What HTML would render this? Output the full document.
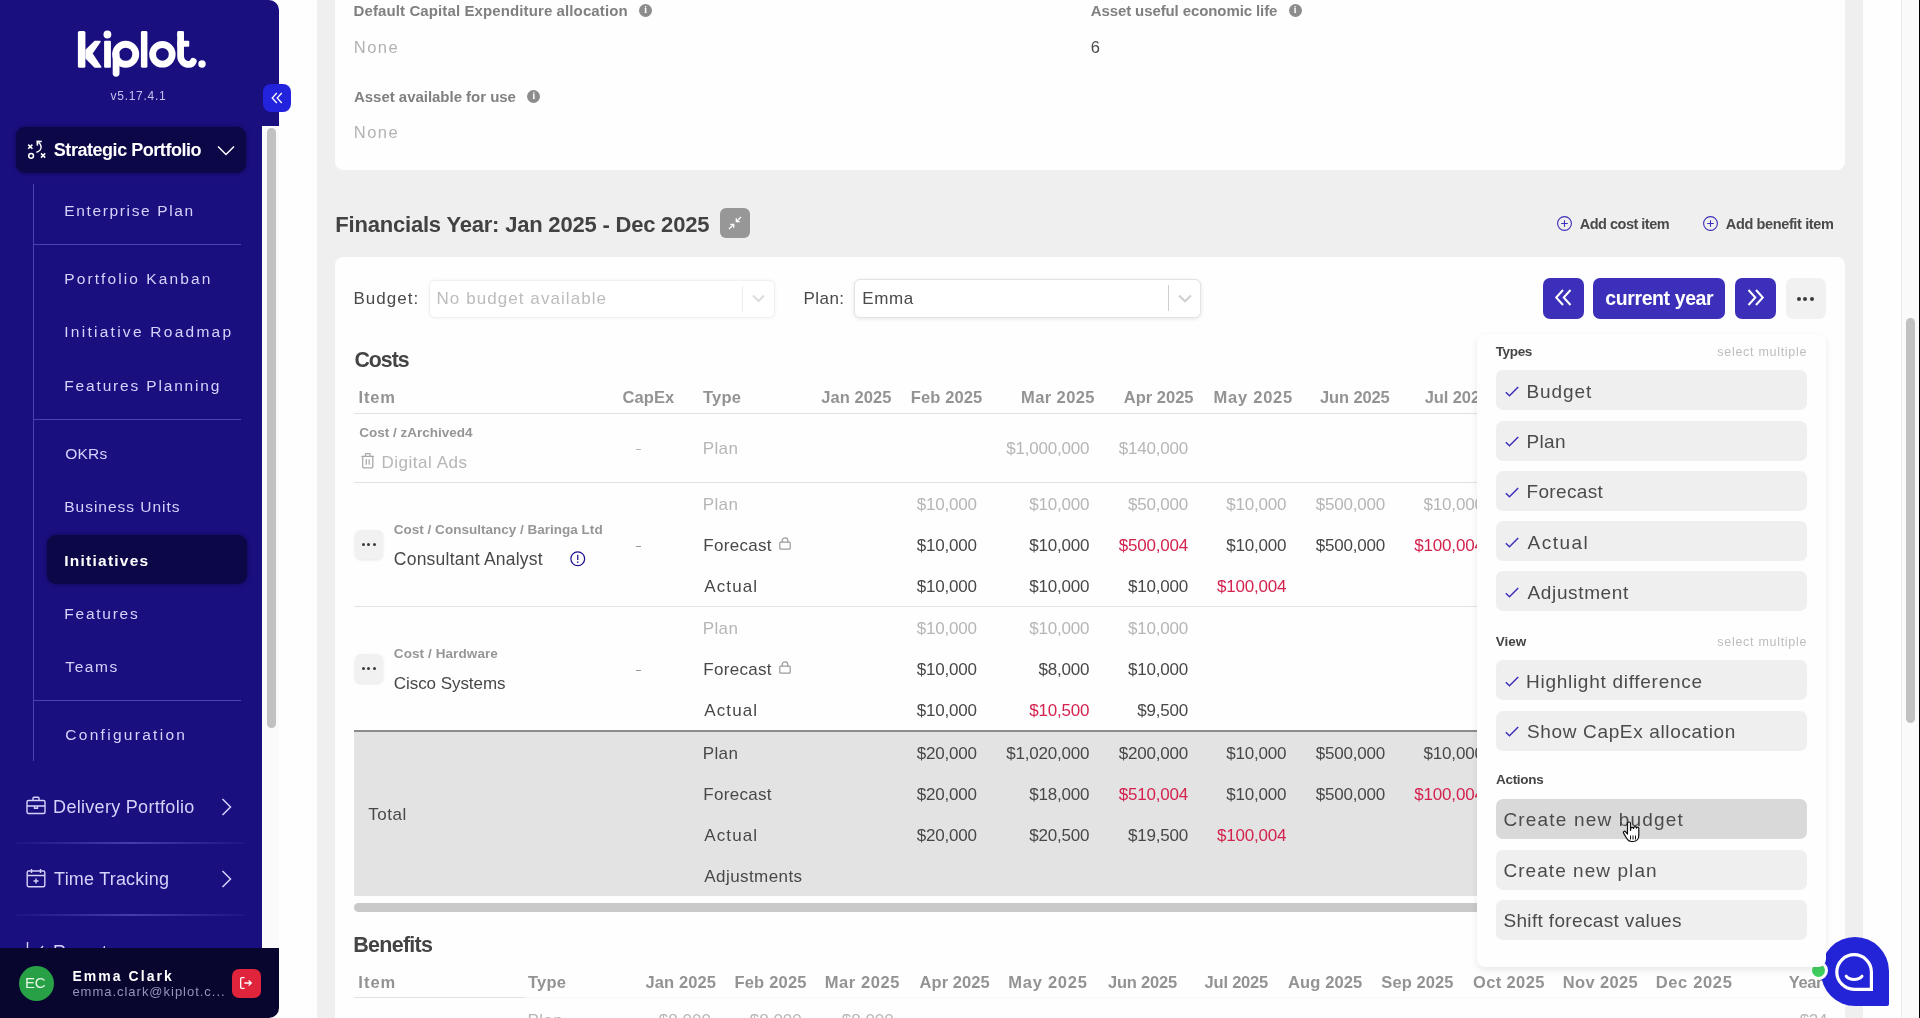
<!DOCTYPE html>
<html lang="en">
<head>
<meta charset="utf-8">
<title>Kiplot - Initiative Financials</title>
<style>
*{box-sizing:border-box;margin:0;padding:0}
html,body{width:1920px;height:1018px;overflow:hidden;background:#fefefe;font-family:"Liberation Sans",sans-serif;color:#444}
#root{position:absolute;left:0;top:0;width:1920px;height:1018px;overflow:hidden;will-change:transform}
.a{position:absolute}
.t{position:absolute;white-space:nowrap;line-height:1}
svg{position:absolute;overflow:visible}
#sb-top{left:0;top:0;width:279px;height:126px;background:#1a0f7f;border-top-right-radius:10px}
#sb-body{left:0;top:120px;width:262px;height:840px;background:#1a0f7f}
#sb-track{left:262px;top:126px;width:17px;height:822px;background:#fafafa}
#sb-thumb{left:267px;top:128px;width:9px;height:600px;background:#c1c1c1;border-radius:5px}
#collapse{left:263px;top:84px;width:28px;height:28px;background:#2322dd;border-radius:8px}
#grp{left:16px;top:127px;width:230px;height:46px;background:#0c0746;border-radius:9px;box-shadow:0 0 4px rgba(8,4,50,.6)}
#act{left:47px;top:535px;width:200px;height:49px;background:#0c0746;border-radius:9px;box-shadow:0 0 4px rgba(8,4,50,.6)}
.nsep{left:33px;width:208px;height:1px;background:#4b43b5}
.gsep{left:16px;width:230px;height:2px;background:linear-gradient(90deg,#1f1487,#453cb0 50%,#1f1487)}
#userbar{left:0;top:948px;width:279px;height:70px;background:#08052e;border-bottom-right-radius:10px}
#pagebg{left:316.500px;top:0;width:1546.500px;height:1018px;background:#efefef}
#card1{left:335px;top:0;width:1510px;height:170px;background:#fefefe;border-radius:0 0 8px 8px}
#card2{left:335px;top:257px;width:1510px;height:770px;background:#fefefe;border-radius:8px 8px 0 0}
.info{width:13px;height:13px;border-radius:50%;background:#8c8c8c;color:#fff;font:bold 9.500px/13px "Liberation Serif",serif;text-align:center}
.sel{border-radius:6px;background:#fff}
.pbtn{top:277.500px;height:41.500px;background:#3c2fba;border-radius:7px}
.hl{height:1px;background:#e2e2e2}
.dots{width:28px;height:29px;border-radius:6px;background:#f1f1f1;box-shadow:0 1px 3px rgba(0,0,0,.10)}
.dot{width:4px;height:4px;border-radius:50%;background:#3a3a3a}
#pop{left:1477px;top:334px;width:349px;height:633px;background:#fefefe;border-radius:8px;box-shadow:0 3px 7px rgba(0,0,0,.09)}
.pi{left:1496px;width:311px;height:40px;background:#efefef;border-radius:7px}
</style>
</head>
<body>
<div id="root">
<div class="a" id="pagebg"></div><div class="a" id="card1"></div><div class="a" id="card2"></div>
<div class="a" style="left:1901px;top:0;width:17.500px;height:1018px;background:#fafafa;border-left:1px solid #ececec"></div>
<div class="a" style="left:1905.500px;top:317.500px;width:9px;height:405px;background:#c1c1c1;border-radius:5px"></div>
<div class="a" style="left:1918.500px;top:0;width:1.500px;height:1018px;background:#000"></div>
<div class="t" style="left:353.50px;top:3.20px;font-size:15px;color:#808080;font-weight:bold;letter-spacing:0.11px;">Default Capital Expenditure allocation</div>
<div class="a info" style="left:639.100px;top:4.100px">i</div>
<div class="t" style="left:353.80px;top:39.20px;font-size:16.5px;color:#b2b2b2;letter-spacing:1.48px;">None</div>
<div class="t" style="left:1090.70px;top:3.20px;font-size:15px;color:#808080;font-weight:bold;letter-spacing:-0.10px;">Asset useful economic life</div>
<div class="a info" style="left:1288.600px;top:4.100px">i</div>
<div class="t" style="left:1090.70px;top:39.20px;font-size:16.5px;color:#4a4a4a;">6</div>
<div class="t" style="left:354.00px;top:89.00px;font-size:15px;color:#808080;font-weight:bold;letter-spacing:-0.03px;">Asset available for use</div>
<div class="a info" style="left:527.400px;top:89.700px">i</div>
<div class="t" style="left:353.80px;top:124.20px;font-size:16.5px;color:#b2b2b2;letter-spacing:1.48px;">None</div>
<div class="t" style="left:335.30px;top:214.00px;font-size:22px;color:#424242;font-weight:bold;letter-spacing:-0.20px;">Financials Year: Jan 2025 - Dec 2025</div>
<div class="a" style="left:720px;top:208px;width:30px;height:30px;border-radius:6px;background:#979797"></div>
<svg style="left:727px;top:215px" width="16" height="16" viewBox="0 0 16 16" fill="none" stroke="#fff" stroke-width="1.3"><path d="M14 2L9.300 6.700M9.300 3.200v3.500h3.500M2 14l4.700-4.700M6.700 12.800V9.300H3.200"/></svg>
<svg style="left:1556.7px;top:215.800px" width="15" height="15" viewBox="0 0 15 15" fill="none" stroke="#3c2fba" stroke-width="1.1"><circle cx="7.500" cy="7.500" r="6.900"/><path d="M7.500 4.200v6.600M4.200 7.500h6.600"/></svg>
<div class="t" style="left:1579.70px;top:217.00px;font-size:14.5px;color:#4a4a4a;font-weight:bold;letter-spacing:-0.49px;">Add cost item</div>
<svg style="left:1702.8px;top:215.800px" width="15" height="15" viewBox="0 0 15 15" fill="none" stroke="#3c2fba" stroke-width="1.1"><circle cx="7.500" cy="7.500" r="6.900"/><path d="M7.500 4.200v6.600M4.200 7.500h6.600"/></svg>
<div class="t" style="left:1725.80px;top:217.00px;font-size:14.5px;color:#4a4a4a;font-weight:bold;letter-spacing:-0.37px;">Add benefit item</div>
<div class="t" style="left:353.50px;top:290.30px;font-size:17px;color:#4a4a4a;letter-spacing:1.02px;">Budget:</div>
<div class="a sel" style="left:429px;top:279.500px;width:346px;height:38px;border:1px solid #f0f0f0;box-shadow:0 0 4px rgba(0,0,0,.05)"></div>
<div class="t" style="left:436.50px;top:290.30px;font-size:17px;color:#bcbcbc;letter-spacing:1.07px;">No budget available</div>
<div class="a" style="left:742px;top:286px;width:1px;height:26px;background:#ececec"></div>
<svg style="left:752px;top:294px" width="13" height="9" viewBox="0 0 13 9" fill="none" stroke="#dcdcdc" stroke-width="2"><path d="M1 1.500l5.500 5.500l5.500-5.500"/></svg>
<div class="t" style="left:803.50px;top:290.30px;font-size:17px;color:#4a4a4a;letter-spacing:0.44px;">Plan:</div>
<div class="a sel" style="left:854px;top:279px;width:347px;height:39px;border:1px solid #e3e3e3;box-shadow:0 1px 4px rgba(0,0,0,.10)"></div>
<div class="t" style="left:862.30px;top:290.30px;font-size:17px;color:#4a4a4a;letter-spacing:0.58px;">Emma</div>
<div class="a" style="left:1168px;top:285px;width:1px;height:26px;background:#cfcfcf"></div>
<svg style="left:1177.500px;top:294px" width="14" height="9" viewBox="0 0 14 9" fill="none" stroke="#cfcfcf" stroke-width="2"><path d="M1 1.500l6 5.800l6-5.800"/></svg>
<div class="a pbtn" style="left:1543px;width:41px"></div>
<svg style="left:1555px;top:289.200px" width="17" height="17" viewBox="0 0 17 17" fill="none" stroke="#fff" stroke-width="2"><path d="M8 1L1.200 8.500L8 16M15.500 1L8.700 8.500l6.800 7.500"/></svg>
<div class="a pbtn" style="left:1593px;width:132px"></div>
<div class="t" style="left:1605.30px;top:288.80px;font-size:19.5px;color:#fff;font-weight:bold;letter-spacing:-0.40px;">current year</div>
<div class="a pbtn" style="left:1735px;width:41px"></div>
<svg style="left:1747px;top:289.200px" width="17" height="17" viewBox="0 0 17 17" fill="none" stroke="#fff" stroke-width="2"><path d="M1.500 1l6.800 7.500L1.500 16M9 1l6.800 7.500L9 16"/></svg>
<div class="a" style="left:1785.500px;top:278px;width:40px;height:41px;border-radius:7px;background:#f1f1f1"></div>
<div class="a dot" style="left:1797.2px;top:297px"></div><div class="a dot" style="left:1803.4px;top:297px"></div><div class="a dot" style="left:1809.6px;top:297px"></div>
<div id="benefits" class="a" style="left:0;top:0;width:1826px;height:1018px;overflow:hidden">
<div class="t" style="left:353.30px;top:934.90px;font-size:21.5px;color:#444;font-weight:bold;letter-spacing:-0.74px;">Benefits</div>
<div class="t" style="left:358.30px;top:974.00px;font-size:16.5px;color:#939393;font-weight:bold;letter-spacing:1.01px;">Item</div><div class="t" style="left:528.00px;top:974.00px;font-size:16.5px;color:#939393;font-weight:bold;letter-spacing:0.23px;">Type</div><div class="t" style="left:645.40px;top:974.00px;font-size:16.5px;color:#939393;font-weight:bold;letter-spacing:0.12px;">Jan 2025</div><div class="t" style="left:734.40px;top:974.00px;font-size:16.5px;color:#939393;font-weight:bold;letter-spacing:0.21px;">Feb 2025</div><div class="t" style="left:824.80px;top:974.00px;font-size:16.5px;color:#939393;font-weight:bold;letter-spacing:0.56px;">Mar 2025</div><div class="t" style="left:919.60px;top:974.00px;font-size:16.5px;color:#939393;font-weight:bold;letter-spacing:0.07px;">Apr 2025</div><div class="t" style="left:1008.20px;top:974.00px;font-size:16.5px;color:#939393;font-weight:bold;letter-spacing:0.76px;">May 2025</div><div class="t" style="left:1107.90px;top:974.00px;font-size:16.5px;color:#939393;font-weight:bold;letter-spacing:-0.19px;">Jun 2025</div><div class="t" style="left:1204.60px;top:974.00px;font-size:16.5px;color:#939393;font-weight:bold;letter-spacing:-0.22px;">Jul 2025</div><div class="t" style="left:1288.00px;top:974.00px;font-size:16.5px;color:#939393;font-weight:bold;letter-spacing:0.12px;">Aug 2025</div><div class="t" style="left:1381.30px;top:974.00px;font-size:16.5px;color:#939393;font-weight:bold;letter-spacing:0.09px;">Sep 2025</div><div class="t" style="left:1473.00px;top:974.00px;font-size:16.5px;color:#939393;font-weight:bold;letter-spacing:0.37px;">Oct 2025</div><div class="t" style="left:1562.80px;top:974.00px;font-size:16.5px;color:#939393;font-weight:bold;letter-spacing:0.35px;">Nov 2025</div><div class="t" style="left:1655.70px;top:974.00px;font-size:16.5px;color:#939393;font-weight:bold;letter-spacing:0.66px;">Dec 2025</div><div class="t" style="left:1788.80px;top:974.00px;font-size:16.5px;color:#939393;font-weight:bold;letter-spacing:-0.42px;">Year</div>
<div class="a hl" style="left:354px;top:997px;width:171px"></div><div class="a" style="left:525px;top:997px;width:1301px;height:1px;background:#f9f9f9"></div>
<div class="t" style="left:527.50px;top:1012.00px;font-size:17px;color:#b6b6b6;letter-spacing:0.41px;">Plan</div><div class="t" style="left:658.86px;top:1012.00px;font-size:17px;color:#b6b6b6;">$8,000</div><div class="t" style="left:749.76px;top:1012.00px;font-size:17px;color:#b6b6b6;">$8,000</div><div class="t" style="left:841.76px;top:1012.00px;font-size:17px;color:#b6b6b6;">$8,000</div><div class="t" style="left:1799.70px;top:1012.00px;font-size:17px;color:#b6b6b6;letter-spacing:-0.28px;">$24,000</div>
</div>
<div id="costs" class="a" style="left:0;top:0;width:1477px;height:1018px;overflow:hidden">
<div class="t" style="left:354.50px;top:350.40px;font-size:21.3px;color:#444;font-weight:bold;letter-spacing:-1.01px;">Costs</div>
<div class="t" style="left:358.50px;top:389.30px;font-size:16.5px;color:#939393;font-weight:bold;letter-spacing:0.85px;">Item</div><div class="t" style="left:622.50px;top:389.30px;font-size:16.5px;color:#939393;font-weight:bold;letter-spacing:0.08px;">CapEx</div><div class="t" style="left:703.00px;top:389.30px;font-size:16.5px;color:#939393;font-weight:bold;letter-spacing:0.23px;">Type</div><div class="t" style="left:821.30px;top:389.30px;font-size:16.5px;color:#939393;font-weight:bold;letter-spacing:0.06px;">Jan 2025</div><div class="t" style="left:910.80px;top:389.30px;font-size:16.5px;color:#939393;font-weight:bold;letter-spacing:0.11px;">Feb 2025</div><div class="t" style="left:1021.00px;top:389.30px;font-size:16.5px;color:#939393;font-weight:bold;letter-spacing:0.41px;">Mar 2025</div><div class="t" style="left:1123.80px;top:389.30px;font-size:16.5px;color:#939393;font-weight:bold;">Apr 2025</div><div class="t" style="left:1213.50px;top:389.30px;font-size:16.5px;color:#939393;font-weight:bold;letter-spacing:0.76px;">May 2025</div><div class="t" style="left:1320.00px;top:389.30px;font-size:16.5px;color:#939393;font-weight:bold;letter-spacing:-0.12px;">Jun 2025</div><div class="t" style="left:1424.80px;top:389.30px;font-size:16.5px;color:#939393;font-weight:bold;letter-spacing:-0.11px;">Jul 2025</div>
<div class="a hl" style="left:354px;top:413px;width:1130px"></div>
<div class="t" style="left:359.30px;top:426.00px;font-size:13.5px;color:#969696;font-weight:bold;">Cost / zArchived4</div><svg style="left:361px;top:452.600px" width="13.500" height="15.500" viewBox="0 0 13.500 15.500" fill="none" stroke="#a8a8a8" stroke-width="1.250"><path d="M.4 3.300h12.700M4.400 3.100V1.200a.5.500 0 0 1 .5-.5h3.700a.5.500 0 0 1 .5.500v1.900M1.700 3.500v10.300a1 1 0 0 0 1 1h8.100a1 1 0 0 0 1-1V3.500M5.300 6.300v5.400M8.200 6.300v5.400"/></svg><div class="t" style="left:381.50px;top:454.00px;font-size:17px;color:#b6b6b6;letter-spacing:0.52px;">Digital Ads</div><div class="a" style="left:636.300px;top:448.600px;width:5px;height:1.200px;background:#b5b5b5"></div><div class="t" style="left:702.70px;top:440.30px;font-size:17px;color:#b6b6b6;letter-spacing:0.41px;">Plan</div><div class="t" style="left:1006.27px;top:440.30px;font-size:17px;color:#b6b6b6;letter-spacing:-0.20px;">$1,000,000</div><div class="t" style="left:1118.65px;top:440.30px;font-size:17px;color:#b6b6b6;letter-spacing:-0.20px;">$140,000</div>
<div class="a hl" style="left:354px;top:482px;width:1130px"></div>
<div class="a dots" style="left:355.0px;top:530.0px"></div><div class="a dot" style="left:361.9px;top:542.8px;width:3.300px;height:3.300px"></div><div class="a dot" style="left:367.1px;top:542.8px;width:3.300px;height:3.300px"></div><div class="a dot" style="left:372.6px;top:542.8px;width:3.300px;height:3.300px"></div>
<div class="t" style="left:393.80px;top:523.30px;font-size:13.5px;color:#969696;font-weight:bold;letter-spacing:0.01px;">Cost / Consultancy / Baringa Ltd</div><div class="t" style="left:393.80px;top:551.00px;font-size:17.5px;color:#484848;letter-spacing:0.23px;">Consultant Analyst</div><svg style="left:570px;top:551.200px" width="15.500" height="15.500" viewBox="0 0 15.500 15.500" fill="none" stroke="#1c1390" stroke-width="1.250"><circle cx="7.750" cy="7.750" r="6.900"/><path d="M7.750 3.700v5.200M7.750 10.400v1.600"/></svg><div class="a" style="left:636.300px;top:545.600px;width:5px;height:1.200px;background:#9a9a9a"></div>
<div class="t" style="left:702.70px;top:496.00px;font-size:17px;color:#b6b6b6;letter-spacing:0.41px;">Plan</div><div class="t" style="left:703.30px;top:537.30px;font-size:17px;color:#484848;letter-spacing:0.30px;">Forecast</div><div class="t" style="left:704.30px;top:577.80px;font-size:17px;color:#484848;letter-spacing:1.11px;">Actual</div><svg style="left:779.0px;top:536.8px" width="12" height="13" viewBox="0 0 12 13" fill="none" stroke="#9a9a9a" stroke-width="1.200"><rect x=".8" y="5.200" width="10.400" height="7" rx="1"/><path d="M3.200 5.200V3.600a2.800 2.800 0 0 1 5.600 0v1.600"/></svg>
<div class="t" style="left:916.70px;top:496.00px;font-size:17px;color:#b6b6b6;letter-spacing:-0.20px;">$10,000</div><div class="t" style="left:1029.30px;top:496.00px;font-size:17px;color:#b6b6b6;letter-spacing:-0.20px;">$10,000</div><div class="t" style="left:1127.90px;top:496.00px;font-size:17px;color:#b6b6b6;letter-spacing:-0.20px;">$50,000</div><div class="t" style="left:1226.20px;top:496.00px;font-size:17px;color:#b6b6b6;letter-spacing:-0.20px;">$10,000</div><div class="t" style="left:1315.65px;top:496.00px;font-size:17px;color:#b6b6b6;letter-spacing:-0.20px;">$500,000</div><div class="t" style="left:1423.60px;top:496.00px;font-size:17px;color:#b6b6b6;letter-spacing:-0.20px;">$10,000</div>
<div class="t" style="left:916.70px;top:537.30px;font-size:17px;color:#484848;letter-spacing:-0.20px;">$10,000</div><div class="t" style="left:1029.30px;top:537.30px;font-size:17px;color:#484848;letter-spacing:-0.20px;">$10,000</div><div class="t" style="left:1118.65px;top:537.30px;font-size:17px;color:#d4224e;letter-spacing:-0.20px;">$500,004</div><div class="t" style="left:1226.20px;top:537.30px;font-size:17px;color:#484848;letter-spacing:-0.20px;">$10,000</div><div class="t" style="left:1315.65px;top:537.30px;font-size:17px;color:#484848;letter-spacing:-0.20px;">$500,000</div><div class="t" style="left:1414.35px;top:537.30px;font-size:17px;color:#d4224e;letter-spacing:-0.20px;">$100,004</div>
<div class="t" style="left:916.70px;top:577.80px;font-size:17px;color:#484848;letter-spacing:-0.20px;">$10,000</div><div class="t" style="left:1029.30px;top:577.80px;font-size:17px;color:#484848;letter-spacing:-0.20px;">$10,000</div><div class="t" style="left:1127.90px;top:577.80px;font-size:17px;color:#484848;letter-spacing:-0.20px;">$10,000</div><div class="t" style="left:1216.95px;top:577.80px;font-size:17px;color:#d4224e;letter-spacing:-0.20px;">$100,004</div>
<div class="a hl" style="left:354px;top:606px;width:1130px"></div>
<div class="a dots" style="left:355.0px;top:654.0px"></div><div class="a dot" style="left:361.9px;top:666.8px;width:3.300px;height:3.300px"></div><div class="a dot" style="left:367.1px;top:666.8px;width:3.300px;height:3.300px"></div><div class="a dot" style="left:372.6px;top:666.8px;width:3.300px;height:3.300px"></div>
<div class="t" style="left:393.80px;top:647.30px;font-size:13.5px;color:#969696;font-weight:bold;letter-spacing:0.09px;">Cost / Hardware</div><div class="t" style="left:393.80px;top:675.00px;font-size:17px;color:#484848;letter-spacing:-0.06px;">Cisco Systems</div><div class="a" style="left:636.300px;top:669.600px;width:5px;height:1.200px;background:#9a9a9a"></div>
<div class="t" style="left:702.70px;top:620.00px;font-size:17px;color:#b6b6b6;letter-spacing:0.41px;">Plan</div><div class="t" style="left:703.30px;top:661.30px;font-size:17px;color:#484848;letter-spacing:0.30px;">Forecast</div><div class="t" style="left:704.30px;top:701.80px;font-size:17px;color:#484848;letter-spacing:1.11px;">Actual</div><svg style="left:779.0px;top:660.8px" width="12" height="13" viewBox="0 0 12 13" fill="none" stroke="#9a9a9a" stroke-width="1.200"><rect x=".8" y="5.200" width="10.400" height="7" rx="1"/><path d="M3.200 5.200V3.600a2.800 2.800 0 0 1 5.600 0v1.600"/></svg>
<div class="t" style="left:916.70px;top:620.00px;font-size:17px;color:#b6b6b6;letter-spacing:-0.20px;">$10,000</div><div class="t" style="left:1029.30px;top:620.00px;font-size:17px;color:#b6b6b6;letter-spacing:-0.20px;">$10,000</div><div class="t" style="left:1127.90px;top:620.00px;font-size:17px;color:#b6b6b6;letter-spacing:-0.20px;">$10,000</div>
<div class="t" style="left:916.70px;top:661.30px;font-size:17px;color:#484848;letter-spacing:-0.20px;">$10,000</div><div class="t" style="left:1038.56px;top:661.30px;font-size:17px;color:#484848;letter-spacing:-0.20px;">$8,000</div><div class="t" style="left:1127.90px;top:661.30px;font-size:17px;color:#484848;letter-spacing:-0.20px;">$10,000</div>
<div class="t" style="left:916.70px;top:701.80px;font-size:17px;color:#484848;letter-spacing:-0.20px;">$10,000</div><div class="t" style="left:1029.30px;top:701.80px;font-size:17px;color:#d4224e;letter-spacing:-0.20px;">$10,500</div><div class="t" style="left:1137.16px;top:701.80px;font-size:17px;color:#484848;letter-spacing:-0.20px;">$9,500</div>
<div class="a" style="left:354px;top:730px;width:1130px;height:166px;background:#e3e3e3;border-top:2px solid #8c8c8c"></div>
<div class="t" style="left:368.30px;top:806.00px;font-size:17px;color:#484848;letter-spacing:0.52px;">Total</div><div class="t" style="left:702.70px;top:745.30px;font-size:17px;color:#484848;letter-spacing:0.41px;">Plan</div><div class="t" style="left:703.30px;top:786.00px;font-size:17px;color:#484848;letter-spacing:0.30px;">Forecast</div><div class="t" style="left:704.30px;top:827.30px;font-size:17px;color:#484848;letter-spacing:1.11px;">Actual</div><div class="t" style="left:704.30px;top:868.00px;font-size:17px;color:#484848;letter-spacing:0.42px;">Adjustments</div>
<div class="t" style="left:916.70px;top:745.30px;font-size:17px;color:#484848;letter-spacing:-0.20px;">$20,000</div><div class="t" style="left:1006.27px;top:745.30px;font-size:17px;color:#484848;letter-spacing:-0.20px;">$1,020,000</div><div class="t" style="left:1118.65px;top:745.30px;font-size:17px;color:#484848;letter-spacing:-0.20px;">$200,000</div><div class="t" style="left:1226.20px;top:745.30px;font-size:17px;color:#484848;letter-spacing:-0.20px;">$10,000</div><div class="t" style="left:1315.65px;top:745.30px;font-size:17px;color:#484848;letter-spacing:-0.20px;">$500,000</div><div class="t" style="left:1423.60px;top:745.30px;font-size:17px;color:#484848;letter-spacing:-0.20px;">$10,000</div>
<div class="t" style="left:916.70px;top:786.00px;font-size:17px;color:#484848;letter-spacing:-0.20px;">$20,000</div><div class="t" style="left:1029.30px;top:786.00px;font-size:17px;color:#484848;letter-spacing:-0.20px;">$18,000</div><div class="t" style="left:1118.65px;top:786.00px;font-size:17px;color:#d4224e;letter-spacing:-0.20px;">$510,004</div><div class="t" style="left:1226.20px;top:786.00px;font-size:17px;color:#484848;letter-spacing:-0.20px;">$10,000</div><div class="t" style="left:1315.65px;top:786.00px;font-size:17px;color:#484848;letter-spacing:-0.20px;">$500,000</div><div class="t" style="left:1414.35px;top:786.00px;font-size:17px;color:#d4224e;letter-spacing:-0.20px;">$100,004</div>
<div class="t" style="left:916.70px;top:827.30px;font-size:17px;color:#484848;letter-spacing:-0.20px;">$20,000</div><div class="t" style="left:1029.30px;top:827.30px;font-size:17px;color:#484848;letter-spacing:-0.20px;">$20,500</div><div class="t" style="left:1127.90px;top:827.30px;font-size:17px;color:#484848;letter-spacing:-0.20px;">$19,500</div><div class="t" style="left:1216.95px;top:827.30px;font-size:17px;color:#d4224e;letter-spacing:-0.20px;">$100,004</div>
<div class="a" style="left:354px;top:903px;width:1140px;height:9px;background:#c9c9c9;border-radius:5px"></div>
</div>
<div id="chat">
<div class="a" style="left:1821px;top:936.500px;width:68px;height:69.500px;background:#2323d8;border-radius:34px 34px 2px 34px"></div>
<svg style="left:1833px;top:950.500px" width="42" height="42" viewBox="0 0 42 42" fill="none" stroke="#fff" stroke-width="3.200"><path d="M38.400 21a17.300 17.300 0 1 0-17.300 17.300h17.300z"/><path d="M13.200 25.200c3.600 4.300 12.200 4.300 15.800 0" stroke-width="3" stroke-linecap="round"/></svg>
<div class="a" style="left:1808.500px;top:960.500px;width:19px;height:19px;border-radius:50%;background:#41cf60;border:3.500px solid #fff"></div>
</div>
<div id="popup">
<div class="a" id="pop"></div>
<div class="t" style="left:1495.70px;top:345.00px;font-size:13.5px;color:#444;font-weight:bold;letter-spacing:-0.35px;">Types</div><div class="t" style="left:1717.30px;top:346.00px;font-size:12.5px;color:#bdbdbd;letter-spacing:0.71px;">select multiple</div>
<div class="a pi" style="top:370.0px"></div><svg style="left:1505.0px;top:385.6px" width="14" height="11" viewBox="0 0 14 11" fill="none" stroke="#3c2fba" stroke-width="1.500"><path d="M.8 6.200l3.700 3.600L13.200 1"/></svg><div class="t" style="left:1526.50px;top:381.50px;font-size:19px;color:#4b4b4b;letter-spacing:0.91px;">Budget</div>
<div class="a pi" style="top:420.5px"></div><svg style="left:1505.0px;top:436.1px" width="14" height="11" viewBox="0 0 14 11" fill="none" stroke="#3c2fba" stroke-width="1.500"><path d="M.8 6.200l3.700 3.600L13.200 1"/></svg><div class="t" style="left:1526.50px;top:432.00px;font-size:19px;color:#4b4b4b;letter-spacing:0.35px;">Plan</div>
<div class="a pi" style="top:471.0px"></div><svg style="left:1505.0px;top:486.6px" width="14" height="11" viewBox="0 0 14 11" fill="none" stroke="#3c2fba" stroke-width="1.500"><path d="M.8 6.200l3.700 3.600L13.200 1"/></svg><div class="t" style="left:1526.50px;top:482.30px;font-size:19px;color:#4b4b4b;letter-spacing:0.34px;">Forecast</div>
<div class="a pi" style="top:521.0px"></div><svg style="left:1505.0px;top:536.6px" width="14" height="11" viewBox="0 0 14 11" fill="none" stroke="#3c2fba" stroke-width="1.500"><path d="M.8 6.200l3.700 3.600L13.200 1"/></svg><div class="t" style="left:1527.50px;top:532.80px;font-size:19px;color:#4b4b4b;letter-spacing:1.48px;">Actual</div>
<div class="a pi" style="top:571.3px"></div><svg style="left:1505.0px;top:586.9px" width="14" height="11" viewBox="0 0 14 11" fill="none" stroke="#3c2fba" stroke-width="1.500"><path d="M.8 6.200l3.700 3.600L13.200 1"/></svg><div class="t" style="left:1527.50px;top:583.00px;font-size:19px;color:#4b4b4b;letter-spacing:0.64px;">Adjustment</div>
<div class="t" style="left:1495.70px;top:634.80px;font-size:13.5px;color:#444;font-weight:bold;letter-spacing:0.03px;">View</div><div class="t" style="left:1717.30px;top:635.80px;font-size:12.5px;color:#bdbdbd;letter-spacing:0.71px;">select multiple</div>
<div class="a pi" style="top:660.4px"></div><svg style="left:1505.0px;top:676.0px" width="14" height="11" viewBox="0 0 14 11" fill="none" stroke="#3c2fba" stroke-width="1.500"><path d="M.8 6.200l3.700 3.600L13.200 1"/></svg><div class="t" style="left:1526.00px;top:671.50px;font-size:19px;color:#4b4b4b;letter-spacing:0.72px;">Highlight difference</div>
<div class="a pi" style="top:710.6px"></div><svg style="left:1505.0px;top:726.2px" width="14" height="11" viewBox="0 0 14 11" fill="none" stroke="#3c2fba" stroke-width="1.500"><path d="M.8 6.200l3.700 3.600L13.200 1"/></svg><div class="t" style="left:1527.00px;top:722.40px;font-size:19px;color:#4b4b4b;letter-spacing:0.65px;">Show CapEx allocation</div>
<div class="t" style="left:1496.00px;top:773.00px;font-size:13.5px;color:#444;font-weight:bold;letter-spacing:-0.30px;">Actions</div>
<div class="a pi" style="top:799.2px;background:#d9d9d9"></div><div class="t" style="left:1503.40px;top:809.70px;font-size:19px;color:#4b4b4b;letter-spacing:1.18px;">Create new budget</div>
<div class="a pi" style="top:849.8px;background:#efefef"></div><div class="t" style="left:1503.40px;top:860.50px;font-size:19px;color:#4b4b4b;letter-spacing:1.06px;">Create new plan</div>
<div class="a pi" style="top:900.0px;background:#efefef"></div><div class="t" style="left:1503.40px;top:911.00px;font-size:19px;color:#4b4b4b;letter-spacing:0.35px;">Shift forecast values</div>
<svg style="left:1622px;top:822px" width="18" height="22" viewBox="0 0 18 22"><path d="M5.500 1.500a1.500 1.500 0 0 1 3 0v7l.3-2.300a1.400 1.400 0 0 1 2.700.3l.2-.8a1.300 1.300 0 0 1 2.600.5l.2-.3a1.200 1.200 0 0 1 2.300.6v6.500c0 3.600-2 6.500-5.600 6.500h-1.800c-2.400 0-3.700-1.300-4.800-3.200l-3-5.200c-.8-1.400 1-2.600 2.100-1.300l1.800 2.200z" fill="#fff" stroke="#111" stroke-width="1.200" stroke-linejoin="round"/><path d="M8.500 13.500v4M11 13.500v4M13.500 13.500v4" stroke="#111" stroke-width="1" fill="none"/></svg>
</div>
<div id="sidebar">
<div class="a" id="sb-track"></div><div class="a" id="sb-thumb"></div>
<div class="a" id="sb-top"></div><div class="a" id="sb-body"></div>
<svg style="left:70px;top:22px" width="144" height="62" viewBox="0 0 144 62" fill="#fff" stroke="none">
<rect x="7.900" y="9" width="7.500" height="36.750" rx="1.600"/>
<path d="M24.600 18.750H30a.8.800 0 0 1 .6 1.300L22.700 31.600L31.300 44.400a.8.800 0 0 1-.7 1.350H24.600L15.400 36.500V27.800z"/>
<circle cx="37.400" cy="12.500" r="3.900"/>
<rect x="34.100" y="18.750" width="6.800" height="27" rx="1"/>
<circle cx="55.700" cy="32.250" r="10.050" fill="none" stroke="#fff" stroke-width="6.900"/>
<path d="M46.100 32V51.300" fill="none" stroke="#fff" stroke-width="6.800" stroke-linecap="round"/>
<rect x="70.900" y="9" width="6.500" height="36.750" rx="1.400"/>
<circle cx="92.400" cy="32.300" r="9.800" fill="none" stroke="#fff" stroke-width="6.800"/>
<path d="M110.600 12.500V34.300A8.100 8.100 0 0 0 118.700 42.400A4.800 4.800 0 0 0 123.300 39.300" fill="none" stroke="#fff" stroke-width="6.750" stroke-linecap="round"/>
<rect x="107.250" y="9" width="6.750" height="6" rx="1.400"/>
<rect x="107.250" y="18.750" width="12" height="6" rx="1"/>
<circle cx="132" cy="42" r="3.700"/>
</svg>
<div class="t" style="left:110.60px;top:89.90px;font-size:12px;color:#c5c1f0;letter-spacing:0.71px;">v5.17.4.1</div>
<div class="a" id="grp"></div>
<svg style="left:26px;top:138px" width="22" height="22" viewBox="0 0 22 22" fill="none" stroke="#fff" stroke-width="1.500"><path d="M2.200 6.600l4.200 4.200M6.400 6.600l-4.200 4.200M15 15.400l4.200 4.200M19.200 15.400l-4.200 4.200"/><circle cx="5.100" cy="17.800" r="2.400"/><path d="M10.300 14.400C13 13.500 15.800 11 15 8C14.600 6.300 13.600 5 12.300 4.300M15.800 3.600L11.200 3.300L11.400 7.600"/></svg>
<div class="t" style="left:53.80px;top:141.20px;font-size:18px;color:#fff;font-weight:bold;letter-spacing:-0.46px;">Strategic Portfolio</div>
<svg style="left:217px;top:145px" width="18" height="11" viewBox="0 0 18 11" fill="none" stroke="#fff" stroke-width="1.5"><path d="M1 1.500l8 8l8-8"/></svg>
<div class="a" style="left:33px;top:184px;width:1px;height:577px;background:#4b43b5"></div>
<div class="t" style="left:64.30px;top:203.30px;font-size:15.5px;color:#d6d2fb;letter-spacing:1.64px;">Enterprise Plan</div>
<div class="t" style="left:64.30px;top:271.20px;font-size:15.5px;color:#d6d2fb;letter-spacing:2.09px;">Portfolio Kanban</div>
<div class="t" style="left:64.30px;top:324.30px;font-size:15.5px;color:#d6d2fb;letter-spacing:2.26px;">Initiative Roadmap</div>
<div class="t" style="left:64.30px;top:378.10px;font-size:15.5px;color:#d6d2fb;letter-spacing:1.83px;">Features Planning</div>
<div class="t" style="left:65.30px;top:445.60px;font-size:15.5px;color:#d6d2fb;letter-spacing:0.20px;">OKRs</div>
<div class="t" style="left:64.30px;top:499.00px;font-size:15.5px;color:#d6d2fb;letter-spacing:0.97px;">Business Units</div>
<div class="t" style="left:64.30px;top:605.90px;font-size:15.5px;color:#d6d2fb;letter-spacing:1.75px;">Features</div>
<div class="t" style="left:65.30px;top:659.30px;font-size:15.5px;color:#d6d2fb;letter-spacing:1.60px;">Teams</div>
<div class="t" style="left:65.30px;top:727.40px;font-size:15.5px;color:#d6d2fb;letter-spacing:2.29px;">Configuration</div>
<div class="a nsep" style="top:244px"></div>
<div class="a nsep" style="top:419px"></div>
<div class="a nsep" style="top:700px"></div>
<div class="a" id="act"></div>
<div class="t" style="left:64.30px;top:552.50px;font-size:15.5px;color:#fff;font-weight:bold;letter-spacing:1.24px;">Initiatives</div>
<svg style="left:26px;top:796px" width="20" height="19" viewBox="0 0 20 19" fill="none" stroke="#d6d2fb" stroke-width="1.4"><rect x="1" y="4.500" width="18" height="13" rx="1.500"/><path d="M7 4.500v-2.200a1 1 0 0 1 1-1h4a1 1 0 0 1 1 1v2.200M1 10h18M8.500 10v2.200h3V10"/></svg>
<div class="t" style="left:53.10px;top:797.80px;font-size:18px;color:#d6d2fb;letter-spacing:0.30px;">Delivery Portfolio</div>
<svg style="left:221px;top:798px" width="11" height="18" viewBox="0 0 11 18" fill="none" stroke="#d6d2fb" stroke-width="1.5"><path d="M1.500 1l8 8l-8 8"/></svg>
<div class="a gsep" style="top:842px"></div>
<svg style="left:26px;top:868px" width="20" height="20" viewBox="0 0 20 20" fill="none" stroke="#d6d2fb" stroke-width="1.4"><rect x="1.200" y="3" width="17.600" height="15.800" rx="1.500"/><path d="M1.200 7.500h17.600M5.500 1v4M14.500 1v4M10 10.500v5M7.500 13h5"/></svg>
<div class="t" style="left:54.10px;top:870.20px;font-size:18px;color:#d6d2fb;letter-spacing:0.21px;">Time Tracking</div>
<svg style="left:221px;top:870px" width="11" height="18" viewBox="0 0 11 18" fill="none" stroke="#d6d2fb" stroke-width="1.5"><path d="M1.500 1l8 8l-8 8"/></svg>
<div class="a gsep" style="top:914px"></div>
<div class="t" style="left:53.10px;top:942.50px;font-size:18px;color:#d6d2fb;letter-spacing:-0.02px;">Reports</div>
<svg style="left:26px;top:941px" width="20" height="20" viewBox="0 0 20 20" fill="none" stroke="#d6d2fb" stroke-width="1.4"><path d="M1.500 1v17.500h17M5 13l4-5l3 3l5-6"/></svg>
<div class="a" id="userbar"></div>
<div class="a" style="left:19px;top:965.500px;width:35px;height:35px;border-radius:50%;background:#28a045"></div>
<div class="t" style="left:24.90px;top:975.10px;font-size:15px;color:#e6f7e8;letter-spacing:-0.10px;">EC</div>
<div class="t" style="left:72.40px;top:969.00px;font-size:14px;color:#fff;font-weight:bold;letter-spacing:2.05px;">Emma Clark</div>
<div class="t" style="left:72.40px;top:985.40px;font-size:13px;color:#9692bd;letter-spacing:0.98px;">emma.clark@kiplot.c...</div>
<div class="a" style="left:232px;top:968.500px;width:29px;height:29px;border-radius:7px;background:#e0243b"></div>
<svg style="left:240.300px;top:977.300px" width="12" height="12" viewBox="0 0 12 12" fill="none" stroke="#fff" stroke-width="1.300"><path d="M4.600 .7H1.600a.9.900 0 0 0-.9.900v8.800a.9.900 0 0 0 .9.900h3M4.300 6h7M8.600 3.400L11.300 6L8.600 8.600"/></svg>
<div class="a" id="collapse"></div>
<svg style="left:271px;top:92px" width="12" height="12" viewBox="0 0 12 12" fill="none" stroke="#fff" stroke-width="1.3"><path d="M5.800 1L1.200 6l4.600 5M10.800 1L6.200 6l4.600 5"/></svg>
</div>
</div>
</body>
</html>
